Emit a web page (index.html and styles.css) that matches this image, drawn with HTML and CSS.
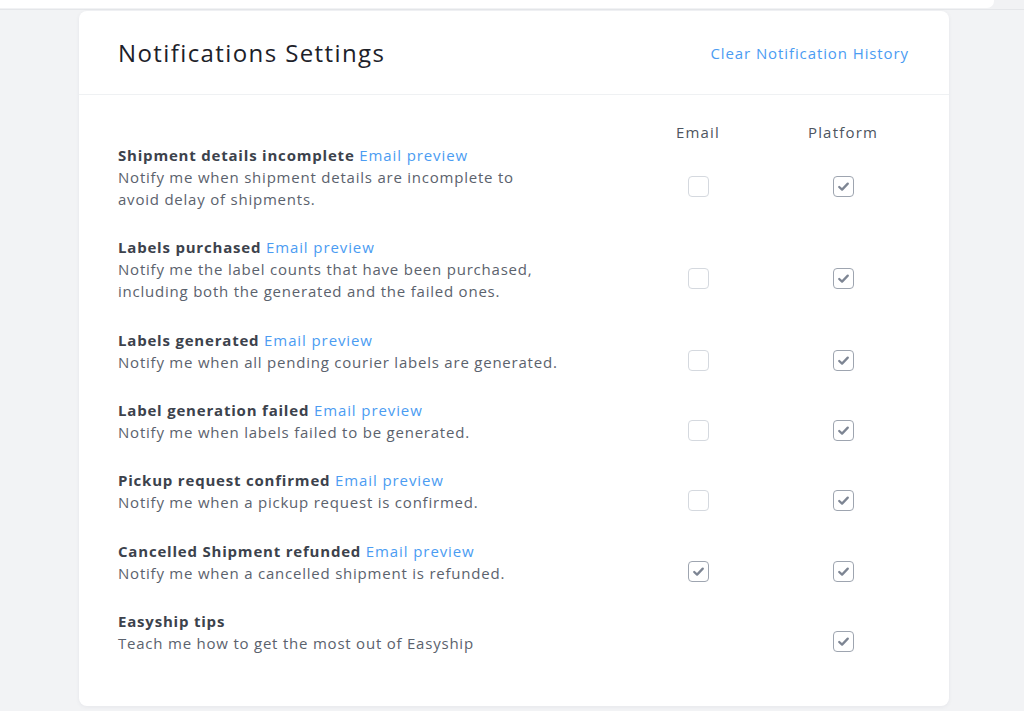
FILE: index.html
```html
<!DOCTYPE html>
<html lang="en">
<head>
<meta charset="utf-8">
<title>Notifications Settings</title>
<link rel="stylesheet" href="styles.css">
</head>
<body>
<div class="topbar"><div class="topbar-inner"></div></div>
<main class="main">
  <section class="card">
    <header class="card-header">
      <h1 class="card-title">Notifications Settings</h1>
      <a class="link clear-link" href="#">Clear Notification History</a>
    </header>
    <div class="card-body">
      <div class="grid head-row">
        <span></span>
        <span class="col-head">Email</span>
        <span class="col-head">Platform</span>
      </div>

      <div class="grid row">
        <div class="row-title"><b>Shipment details incomplete</b> <a class="link" href="#">Email preview</a></div>
        <div class="row-desc">Notify me when shipment details are incomplete to avoid delay of shipments.</div>
        <span class="cb cb-email"></span>
        <span class="cb cb-platform checked"><svg viewBox="0 0 20 20"><path d="M5.5 10.5l3 2.8L14.5 7"/></svg></span>
      </div>

      <div class="grid row">
        <div class="row-title"><b>Labels purchased</b> <a class="link" href="#">Email preview</a></div>
        <div class="row-desc">Notify me the label counts that have been purchased, including both the generated and the failed ones.</div>
        <span class="cb cb-email"></span>
        <span class="cb cb-platform checked"><svg viewBox="0 0 20 20"><path d="M5.5 10.5l3 2.8L14.5 7"/></svg></span>
      </div>

      <div class="grid row">
        <div class="row-title"><b>Labels generated</b> <a class="link" href="#">Email preview</a></div>
        <div class="row-desc">Notify me when all pending courier labels are generated.</div>
        <span class="cb cb-email"></span>
        <span class="cb cb-platform checked"><svg viewBox="0 0 20 20"><path d="M5.5 10.5l3 2.8L14.5 7"/></svg></span>
      </div>

      <div class="grid row">
        <div class="row-title"><b>Label generation failed</b> <a class="link" href="#">Email preview</a></div>
        <div class="row-desc">Notify me when labels failed to be generated.</div>
        <span class="cb cb-email"></span>
        <span class="cb cb-platform checked"><svg viewBox="0 0 20 20"><path d="M5.5 10.5l3 2.8L14.5 7"/></svg></span>
      </div>

      <div class="grid row">
        <div class="row-title"><b>Pickup request confirmed</b> <a class="link" href="#">Email preview</a></div>
        <div class="row-desc">Notify me when a pickup request is confirmed.</div>
        <span class="cb cb-email"></span>
        <span class="cb cb-platform checked"><svg viewBox="0 0 20 20"><path d="M5.5 10.5l3 2.8L14.5 7"/></svg></span>
      </div>

      <div class="grid row">
        <div class="row-title"><b>Cancelled Shipment refunded</b> <a class="link" href="#">Email preview</a></div>
        <div class="row-desc">Notify me when a cancelled shipment is refunded.</div>
        <span class="cb cb-email checked"><svg viewBox="0 0 20 20"><path d="M5.5 10.5l3 2.8L14.5 7"/></svg></span>
        <span class="cb cb-platform checked"><svg viewBox="0 0 20 20"><path d="M5.5 10.5l3 2.8L14.5 7"/></svg></span>
      </div>

      <div class="grid row">
        <div class="row-title"><b>Easyship tips</b></div>
        <div class="row-desc">Teach me how to get the most out of Easyship</div>
        <span class="cb-empty cb-email"></span>
        <span class="cb cb-platform checked"><svg viewBox="0 0 20 20"><path d="M5.5 10.5l3 2.8L14.5 7"/></svg></span>
      </div>
    </div>
  </section>
</main>
</body>
</html>
```

FILE: styles.css
```css
* { box-sizing: border-box; }
html, body { margin: 0; padding: 0; }
body {
  background: #f2f3f5;
  font-family: "Open Sans", "Liberation Sans", sans-serif;
  color: #5b626d;
  height: 711px;
  overflow: hidden;
}
.topbar {
  height: 10px;
  border-bottom: 1px solid #e4e6e9;
  background: #f1f2f4;
}
.topbar-inner {
  width: 994px;
  height: 8px;
  background: #ffffff;
  border-bottom-right-radius: 7px;
}
.main {
  padding: 1px 0 0 79px;
}
.card {
  width: 870px;
  background: #ffffff;
  border-radius: 8px;
  box-shadow: 0 1px 4px rgba(30, 40, 60, 0.06);
  padding-bottom: 52px;
}
.card-header {
  height: 84px;
  display: flex;
  align-items: center;
  justify-content: space-between;
  padding: 0 40px 0 39px;
  border-bottom: 1px solid #eff1f3;
}
.card-title {
  margin: 0;
  font-size: 24px;
  font-weight: 400;
  color: #1d2129;
  letter-spacing: 1.4px;
}
.link {
  color: #4b9cf2;
  text-decoration: none;
  font-weight: 400;
}
.clear-link {
  font-size: 15px;
  letter-spacing: 0.9px;
}
.card-body {
  padding: 26px 61px 0 39px;
  display: flex;
  flex-direction: column;
  gap: 26.35px;
}
.grid {
  display: grid;
  grid-template-columns: 1fr 90px 90px;
  column-gap: 55px;
  font-size: 15px;
  line-height: 22px;
  letter-spacing: 0.78px;
}
.head-row { margin-bottom: -25.35px; }
.col-head {
  text-align: center;
  color: #4d5560;
  letter-spacing: 1.2px;
}
.row-title {
  grid-column: 1;
  grid-row: 1;
  color: #3e4550;
}
.row-title b { font-weight: 700; color: #3c424c; letter-spacing: 0.8px; }
.row-title .link { letter-spacing: 0.9px; }
.row-desc {
  grid-column: 1;
  grid-row: 2;
  max-width: 440px;
}
.cb, .cb-empty {
  grid-row: 2;
  align-self: center;
  justify-self: center;
  width: 21px;
  height: 21px;
  margin-top: -3px;
}
.cb {
  border: 1px solid #d5d9df;
  border-radius: 4px;
  display: flex;
  align-items: center;
  justify-content: center;
}
.cb-email { grid-column: 2; }
.cb-platform { grid-column: 3; }
.cb.checked { border-color: #9ea5b0; }
.cb svg { width: 19px; height: 19px; display: block; }
.cb path {
  fill: none;
  stroke: #7d8593;
  stroke-width: 2.4;
  stroke-linecap: round;
  stroke-linejoin: round;
}
```
